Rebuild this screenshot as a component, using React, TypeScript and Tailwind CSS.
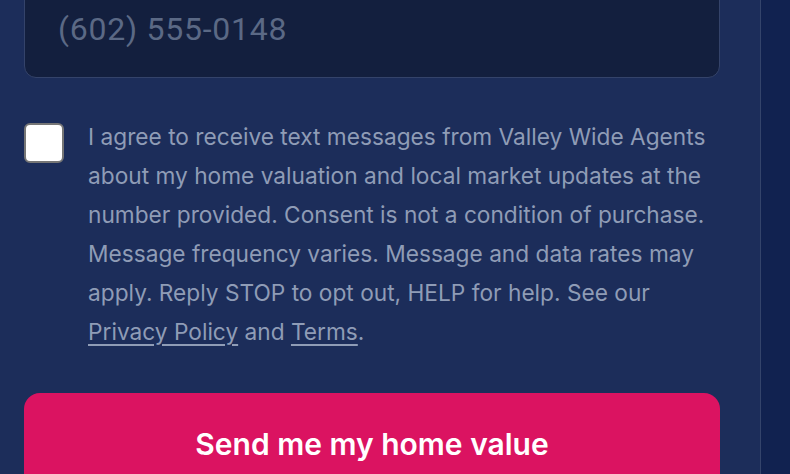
import React from "react";

export default function App() {
  return (
    <div className="w-[790px] h-[474px] overflow-hidden bg-[#112250] flex">
      <div className="w-[761px] h-full shrink-0 bg-[#1c2d5a] border-r border-[#34446b] pl-6 pr-[40px] flex flex-col">
        <div className="-mt-[20px] h-[98px] shrink-0 rounded-[12px] border border-[#34436a] bg-[#131f3e] flex items-center px-[33px]">
          <span
            className="text-[32px] tracking-[0.75px] text-[#5b6985]"
            style={{ fontFamily: "Roboto, 'Noto Sans', sans-serif" }}
          >
            (602) 555-0148
          </span>
        </div>
        <div className="mt-[39px] flex items-start gap-6">
          <div className="mt-[6px] w-[40px] h-[40px] shrink-0 rounded-[6px] border-2 border-[#767676] bg-white" />
          <p
            className="text-[22.7px] leading-[39px] text-[#8f9cb6]"
            style={{ fontFamily: "Inter, 'Noto Sans', sans-serif" }}
          >
            I agree to receive text messages from Valley Wide Agents about my home valuation and local market updates at the number provided. Consent is not a condition of purchase. Message frequency varies. Message and data rates may apply. Reply STOP to opt out, HELP for help. See our{" "}
            <a className="underline underline-offset-[4px]">Privacy Policy</a> and{" "}
            <a className="underline underline-offset-[4px]">Terms</a>.
          </p>
        </div>
        <div className="mt-[42px] h-[102px] shrink-0 rounded-[16px] bg-[#db1361] flex items-center justify-center">
          <span
            className="text-[30px] font-semibold text-white"
            style={{ fontFamily: "Inter, 'Noto Sans', sans-serif" }}
          >
            Send me my home value
          </span>
        </div>
      </div>
    </div>
  );
}
